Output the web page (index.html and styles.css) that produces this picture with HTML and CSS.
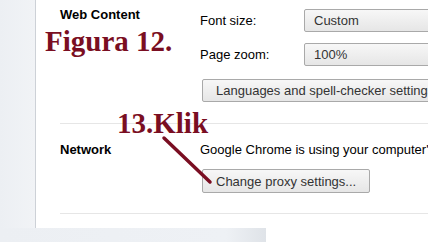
FILE: index.html
```html
<!DOCTYPE html>
<html lang="en">
<head>
  <meta charset="UTF-8" />
  <meta name="viewport" content="width=device-width, initial-scale=1.0"/>
  <title>Under the Hood</title>
  <link rel="stylesheet" href="styles.css">
</head>
<body>

  <div class="window">
    <div class="main">
      <aside class="sidebar"></aside>

      <div class="content">
        <section class="section section-web">
          <h3 class="section-title">Web Content</h3>
          <div class="section-body">
            <div class="field">
              <span class="field-label">Font size:</span>
              <select class="dropdown"><option>Custom</option></select>
            </div>
            <div class="field">
              <span class="field-label">Page zoom:</span>
              <select class="dropdown"><option>100%</option></select>
            </div>
            <button class="btn btn-wide" type="button">Languages and spell-checker settings...</button>
          </div>
        </section>

        <section class="section section-network">
          <h3 class="section-title">Network</h3>
          <div class="section-body">
            <p class="section-text">Google Chrome is using your computer's system proxy settings to connect to the network.</p>
            <button class="btn" type="button">Change proxy settings...</button>
          </div>
        </section>
      </div>
    </div>

    <div class="footer"><div class="footer-shade"></div></div>

    <!-- tutorial annotations drawn over the screenshot -->
    <div class="note note-figure">Figura 12.</div>
    <div class="note note-click">13.Klik</div>
    <svg class="pointer" width="60" height="60" viewBox="0 0 60 60">
      <line x1="4" y1="4" x2="50" y2="48" stroke="#7a0e22" stroke-width="3.5" stroke-linecap="round"/>
    </svg>
  </div>

</body>
</html>
```

FILE: styles.css
```css
html, body {
  margin: 0;
  height: 100%;
  overflow: hidden;
}

body {
  font-family: "Liberation Sans", Arial, sans-serif;
  font-size: 13px;
  color: #000;
  background-color: #fff;
}

.window {
  position: relative;
  width: 428px;
  height: 242px;
}

.main {
  display: flex;
  height: 228px;
}

.sidebar {
  width: 35px;
  flex-shrink: 0;
  background: linear-gradient(to right, #eceff3, #f1f3f6);
  border-right: 1px solid #cdd1d7;
}

.content {
  flex: 1;
  min-width: 0;
  padding-left: 24px;
}

.section {
  display: grid;
  grid-template-columns: 140px 1fr;
  border-bottom: 1px solid #e6e6e6;
}

.section-title {
  margin: 0;
  font-size: 13px;
  font-weight: bold;
  line-height: 16px;
}

.section-body {
  display: flex;
  flex-direction: column;
  align-items: flex-start;
  min-width: 0;
}

.section-web {
  padding: 7px 0 21px;
}

.section-web .section-body {
  padding-top: 2px;
}

.section-network {
  padding: 18px 0 20px;
}

.field {
  display: flex;
  align-items: center;
  height: 23px;
  margin-bottom: 11px;
}

.field:last-of-type {
  margin-bottom: 0;
}

.field-label {
  width: 104px;
  flex-shrink: 0;
}

.dropdown {
  -webkit-appearance: none;
  appearance: none;
  width: 160px;
  height: 23px;
  padding: 0 9px;
  font-family: inherit;
  font-size: 13px;
  color: #333;
  border: 1px solid #a9a9a9;
  border-radius: 2px;
  background: linear-gradient(#f7f7f7, #e6e6e6);
}

.btn {
  height: 23px;
  margin: 13px 0 0 2px;
  padding: 0 13px;
  font-family: inherit;
  font-size: 13px;
  color: #333;
  white-space: nowrap;
  border: 1px solid #a9a9a9;
  border-radius: 2px;
  background: linear-gradient(#f7f7f7, #e6e6e6);
}

.section-text {
  margin: 0;
  line-height: 16px;
  white-space: nowrap;
}

.section-network .btn {
  height: 24px;
  margin-top: 11px;
}

.footer {
  height: 14px;
  background-color: #fff;
}

.footer-shade {
  width: 266px;
  height: 100%;
  background: linear-gradient(to right, #eceff3 0%, #eef1f5 85%, #dfe3e8 100%);
}

.note {
  position: absolute;
  font-family: "Liberation Serif", "Times New Roman", serif;
  font-size: 29px;
  font-weight: bold;
  line-height: 29px;
  color: #7a0e22;
  white-space: nowrap;
}

.note-figure {
  left: 45px;
  top: 27px;
}

.note-click {
  left: 117px;
  top: 109px;
}

.pointer {
  position: absolute;
  left: 160px;
  top: 134px;
}
```
